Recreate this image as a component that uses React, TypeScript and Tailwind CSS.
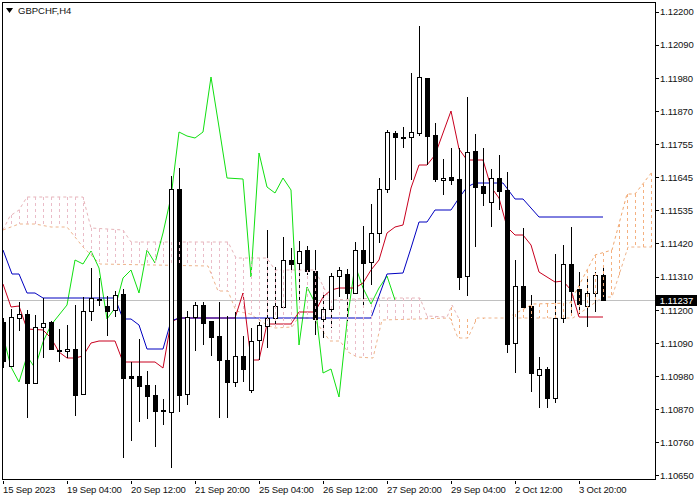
const priceLabels = ["1.12200", "1.12090", "1.11980", "1.11870", "1.11755", "1.11645", "1.11535", "1.11420", "1.11310", "1.11200", "1.11090", "1.10980", "1.10870", "1.10760", "1.10650"];
const timeLabels = ["15 Sep 2023", "19 Sep 04:00", "20 Sep 12:00", "21 Sep 20:00", "25 Sep 04:00", "26 Sep 12:00", "27 Sep 20:00", "29 Sep 04:00", "2 Oct 12:00", "3 Oct 20:00"];

// [high, low, body top, body bottom, bullish]
const candles: [number, number, number, number, boolean][] = [
  [318, 368, 322, 361, false], [309, 367, 317, 366, true], [302, 331, 314, 318, true], [310, 418, 314, 383, false],
  [315, 383, 327, 383, true], [298, 358, 323, 327, true], [321, 350, 322, 349, false], [329, 362, 350, 351, false],
  [325, 358, 349, 351, true], [305, 416, 349, 395, false], [297, 394, 311, 394, true], [268, 321, 298, 311, true],
  [278, 306, 299, 300, false], [296, 336, 306, 311, false], [291, 317, 295, 310, true], [289, 458, 294, 378, false],
  [362, 441, 376, 378, false], [339, 422, 376, 386, false], [371, 419, 385, 396, false], [385, 447, 395, 411, false],
  [399, 425, 410, 411, false], [176, 468, 189, 412, true], [168, 412, 189, 395, false], [311, 405, 317, 394, true],
  [302, 351, 305, 317, true], [302, 345, 305, 323, false], [321, 356, 321, 337, false], [302, 418, 336, 360, false],
  [316, 418, 360, 382, false], [312, 387, 356, 382, true], [336, 382, 356, 369, false], [328, 393, 341, 390, true],
  [322, 360, 325, 340, true], [230, 348, 318, 326, true], [267, 325, 306, 318, true], [237, 307, 260, 307, true],
  [248, 273, 260, 264, false], [241, 300, 251, 263, true], [246, 275, 250, 271, false], [250, 335, 271, 319, false],
  [292, 338, 309, 319, true], [273, 328, 276, 309, true], [267, 297, 270, 276, true], [269, 321, 274, 293, false],
  [242, 293, 250, 293, true], [226, 305, 250, 263, false], [204, 285, 233, 262, true], [178, 243, 189, 233, true],
  [130, 193, 132, 189, true], [131, 180, 133, 137, false], [127, 148, 137, 138, false], [73, 180, 132, 137, true],
  [26, 136, 77, 133, true], [78, 165, 78, 136, false], [123, 182, 135, 179, false], [159, 195, 178, 180, true],
  [148, 185, 177, 180, false], [148, 290, 179, 277, false], [97, 296, 152, 276, true], [134, 247, 151, 187, false],
  [148, 206, 186, 193, false], [169, 227, 178, 202, true], [155, 210, 178, 191, false], [172, 353, 190, 344, false],
  [260, 373, 286, 343, true], [228, 308, 286, 307, false], [295, 392, 306, 373, false], [357, 408, 369, 375, true],
  [367, 408, 369, 398, false], [254, 403, 318, 398, true], [245, 323, 264, 318, true], [227, 313, 264, 291, false],
  [272, 314, 289, 304, false], [278, 327, 293, 306, true], [272, 312, 275, 293, true], [265, 300, 275, 300, false],
];

const blue = "3,250 12,274 19,274 27,293 35,293 43,298 115,298 123,319 131,319 139,325 147,349 163,349 171,321 179,318 371,318 387,274 403,273 411,248 419,222 427,222 435,210 451,210 459,198 467,187 475,183 503,183 515,199 523,199 539,217 603,217";
const red = "3,284 11,307 19,306 27,329 43,330 51,338 59,352 67,358 75,358 83,356 91,343 99,341 115,341 123,362 155,362 163,368 171,322 179,318 235,318 243,293 251,360 259,360 267,324 291,324 299,312 315,312 323,297 331,290 339,288 355,288 363,283 371,270 379,260 387,233 395,227 403,225 411,188 419,165 427,165 435,155 451,111 459,149 467,160 483,160 491,187 499,198 507,227 515,235 523,235 531,245 539,272 555,282 563,281 571,290 579,317 603,317";
const green = "3,336 11,367 19,382 27,356 35,368 43,342 51,325 67,305 75,260 83,264 91,251 99,268 107,319 115,308 123,278 131,270 139,293 147,250 155,263 163,233 171,197 179,132 187,136 195,138 203,132 211,77 219,127 227,178 243,179 251,277 259,153 267,187 275,193 283,178 291,190 299,345 307,287 315,303 323,373 331,369 339,397 347,322 355,265 363,288 371,304 379,288 387,276 395,300";

const cloudTop: [number, number][] = [[3, 230], [10, 216], [19, 210], [27, 197], [83, 197], [91, 228], [123, 230], [131, 242], [228, 242], [236, 258], [267, 258], [275, 270], [315, 270], [330, 300], [380, 298], [420, 298], [427, 316], [447, 317], [452, 305], [459, 319], [507, 318], [533, 304], [570, 303], [587, 270], [595, 255], [612, 250], [627, 194], [635, 194], [652, 172]];
const cloudBottom: [number, number][] = [[3, 230], [19, 224], [35, 224], [51, 227], [67, 227], [83, 247], [100, 264], [208, 266], [218, 291], [228, 291], [236, 311], [250, 314], [267, 325], [275, 328], [292, 327], [298, 318], [313, 318], [330, 341], [340, 341], [348, 352], [357, 357], [373, 358], [382, 320], [450, 318], [458, 338], [468, 338], [477, 318], [573, 318], [603, 297], [612, 297], [628, 247], [652, 247]];

function yAt(points: [number, number][], x: number) {
  for (let i = 1; i < points.length; i++) {
    const [x0, y0] = points[i - 1];
    const [x1, y1] = points[i];
    if (x <= x1) return y0 + ((y1 - y0) * (x - x0)) / (x1 - x0);
  }
  return points[points.length - 1][1];
}

const toPoints = (points: [number, number][]) => points.map((p) => p.join(",")).join(" ");

function Chart() {
  const hatch = [];
  for (let x = 3; x < 655; x += 8) hatch.push(x);

  return (
    <svg width={652} height={476} viewBox="3 3 652 476" className="block">
      <polyline points={toPoints(cloudTop.filter((p) => p[0] < 480))} fill="none" stroke="#e6b4b8" strokeDasharray="3 3" />
      <polyline points={toPoints(cloudTop.filter((p) => p[0] >= 477))} fill="none" stroke="#f0a870" strokeDasharray="3 3" />
      <polyline points={toPoints(cloudBottom)} fill="none" stroke="#eeb48c" strokeDasharray="3 3" />
      <line x1={3} x2={655} y1={300.5} y2={300.5} stroke="#c0c0c0" shapeRendering="crispEdges" />
      <polyline points={green} fill="none" stroke="#10e010" />
      <polyline points={red} fill="none" stroke="#c8001e" />
      <polyline points={blue} fill="none" stroke="#0000c0" />
      {candles.map(([high, low, top, bottom, bull], i) => {
        const x = 3 + i * 8;
        return (
          <g key={i} shapeRendering="crispEdges">
            <rect x={x} y={high} width={1} height={low - high} fill="#000" />
            {bull ? (
              <rect x={x - 1.5} y={top + 0.5} width={4} height={bottom - top} fill="#fff" stroke="#000" />
            ) : (
              <rect x={x - 2} y={top} width={5} height={bottom - top + 1} fill="#000" />
            )}
          </g>
        );
      })}
      {hatch.map((x) => (
        <line
          key={x}
          x1={x + 0.5}
          x2={x + 0.5}
          y1={yAt(cloudTop, x)}
          y2={yAt(cloudBottom, x)}
          stroke={x < 445 ? "#eabcc8" : "#f4b080"}
          strokeDasharray="3 3"
          shapeRendering="crispEdges"
        />
      ))}
    </svg>
  );
}

export default function App() {
  return (
    <div className="relative flex h-[500px] w-[700px] flex-col overflow-hidden bg-white pl-[2px] pt-[2px] font-['Liberation_Sans',sans-serif] text-[9.5px] leading-none text-[#111]">
      <div className="flex">
        <div className="relative h-[478px] w-[654px] border border-black">
          <Chart />
          <div className="absolute left-[3px] top-[3px] flex items-center gap-[5px]">
            <svg width={7} height={5} viewBox="0 0 7 5">
              <polygon points="0,0 7,0 3.5,5" fill="#000" />
            </svg>
            <span>GBPCHF,H4</span>
          </div>
        </div>
        <div className="flex h-[479px] flex-col justify-between pt-[5px]">
          {priceLabels.map((label) => (
            <div key={label} className="flex h-[10px] items-center gap-[1px]">
              <span className="h-px w-[3px] bg-black" />
              <span className="tracking-[-0.1px]">{label}</span>
            </div>
          ))}
        </div>
      </div>
      <div className="ml-px flex tracking-[-0.15px]">
        {timeLabels.map((label) => (
          <div key={label} className="w-[64px]">
            <div className="h-[3px] w-px bg-black" />
            <div className="mt-px whitespace-nowrap">{label}</div>
          </div>
        ))}
      </div>
      <div className="absolute left-[656px] top-[295px] flex h-[11px] w-[41px] items-center justify-center bg-black text-white">
        1.11237
      </div>
    </div>
  );
}
